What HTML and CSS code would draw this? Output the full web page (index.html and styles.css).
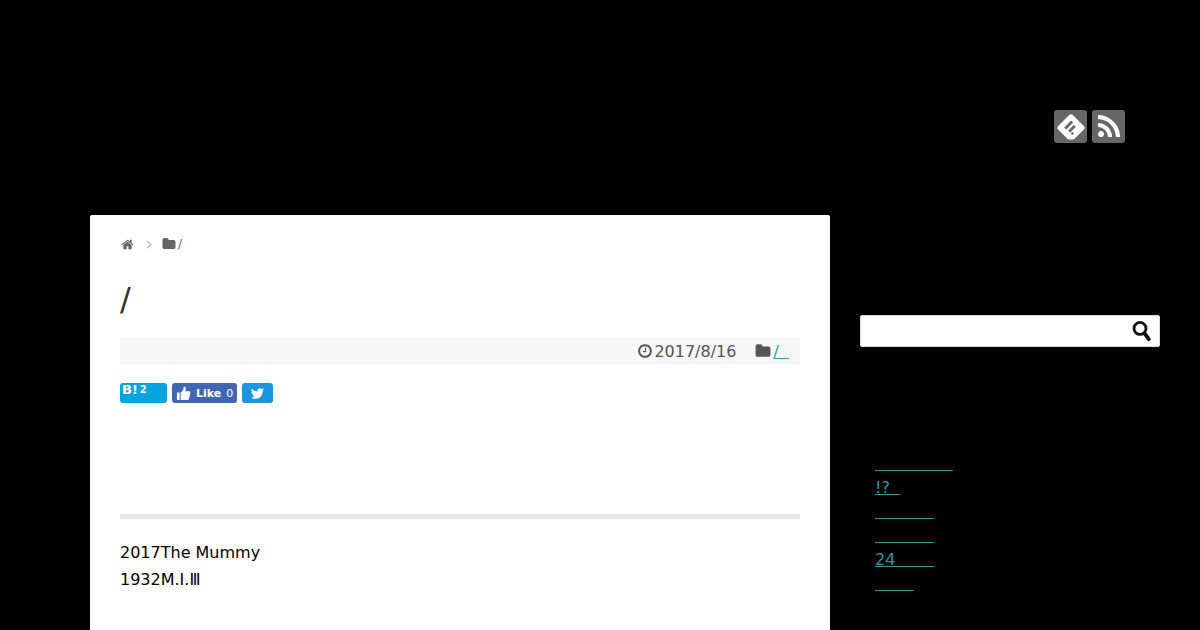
FILE: index.html
```html
<!DOCTYPE html>
<html lang="ja">
<head>
    <meta charset="UTF-8">
    <title>/</title>
    <link rel="stylesheet" href="styles.css">
</head>
<body>
    <!-- Header -->
    <header class="header">
        <a class="sns-icon" href="#">
            <svg viewBox="0 0 32 32" width="32" height="32"><path fill="#fff" fill-rule="evenodd" d="M14 4.2 a2.8 2.8 0 0 1 4 0 L28.6 14.8 a2.8 2.8 0 0 1 0 4 L19.6 27.8 a2.8 2.8 0 0 1 -2 .8 H14.4 a2.8 2.8 0 0 1 -2 -.8 L3.4 18.8 a2.8 2.8 0 0 1 0 -4 Z M16.2 9.4 L9.2 16.4 L11.2 18.4 L18.2 11.4 Z M18.8 14 L13.2 19.6 L15.2 21.6 L20.8 16 Z M17.4 20.8 L15.8 22.4 L17.4 24 L19 22.4 Z"/></svg>
        </a>
        <a class="sns-icon" href="#">
            <svg viewBox="0 0 1792 1792" width="28" height="28"><path fill="#fff" d="M576 1344q0 80-56 136t-136 56-136-56-56-136 56-136 136-56 136 56 56 136zm512 123q2 28-17 48-18 21-47 21h-135q-25 0-43-16.5t-20-41.5q-22-229-184.5-391.5t-391.5-184.5q-25-2-41.5-20t-16.5-43v-135q0-29 21-47 17-17 43-17h5q160 13 306 80.5t259 181.5q114 113 181.5 259t80.5 306zm512 2q2 27-18 47-18 20-46 20h-143q-26 0-44.5-17.5t-19.5-42.5q-12-215-101-408.5t-231.5-336-336-231.5-408.5-102q-25-1-42.5-19.5t-17.5-43.5v-143q0-28 20-46 18-18 44-18h3q262 13 501.5 120t425.5 294q187 186 294 425.5t120 501.5z"/></svg>
        </a>
    </header>

    <div class="content">
        <!-- Main article -->
        <main class="article">
            <div class="breadcrumb">
                <svg class="crumb-home" viewBox="0 0 1792 1792" width="13" height="13"><path fill="#666" d="M1472 992v480q0 26-19 45t-45 19h-384v-384h-256v384h-384q-26 0-45-19t-19-45v-480q0-1 .5-3t.5-3l575-474 575 474q1 2 1 6zm223-69l-62 74q-8 9-21 11h-3q-13 0-21-7l-692-577-692 577q-12 8-24 7-13-2-21-11l-62-74q-8-10-7-23.5t11-21.5l719-599q32-26 76-26t76 26l244 204v-195q0-14 9-23t23-9h192q14 0 23 9t9 23v408l219 182q10 8 11 21.5t-7 23.5z"/></svg>
                <svg class="crumb-sep" viewBox="0 0 8 12" width="6" height="9"><path fill="none" stroke="#777" stroke-width="1.2" d="M1.5 1 L6.5 6 L1.5 11"/></svg>
                <svg class="crumb-folder" viewBox="0 0 1792 1792" width="14" height="14"><path fill="#666" d="M1728 608v704q0 92-66 158t-158 66h-1216q-92 0-158-66t-66-158v-960q0-92 66-158t158-66h320q92 0 158 66t66 158v32h672q92 0 158 66t66 158z"/></svg>
                <span>/</span>
            </div>

            <h1 class="title">/</h1>

            <div class="meta">
                <svg viewBox="0 0 1792 1792" width="16" height="16"><path fill="#555" d="M1024 544v448q0 14-9 23t-23 9h-320q-14 0-23-9t-9-23v-64q0-14 9-23t23-9h224v-352q0-14 9-23t23-9h64q14 0 23 9t9 23zm416 352q0-148-73-273t-198-198-273-73-273 73-198 198-73 273 73 273 198 198 273 73 273-73 198-198 73-273zm224 0q0 209-103 385.5t-279.5 279.5-385.5 103-385.5-103-279.5-279.5-103-385.5 103-385.5 279.5-279.5 385.5-103 385.5 103 279.5 279.5 103 385.5z"/></svg>
                <span class="meta-date">2017/8/16</span>
                <svg class="meta-folder" viewBox="0 0 1792 1792" width="16" height="16"><path fill="#555" d="M1728 608v704q0 92-66 158t-158 66h-1216q-92 0-158-66t-66-158v-960q0-92 66-158t158-66h320q92 0 158 66t66 158v32h672q92 0 158 66t66 158z"/></svg>
                <a class="meta-link" href="#">/&nbsp;&nbsp;</a>
            </div>

            <div class="share">
                <a class="btn-hatena" href="#"><b>B!</b><span>2</span></a>
                <a class="btn-like" href="#">
                    <svg viewBox="0 0 16 16" width="15" height="15"><path fill="#fff" d="M1 7 H4 V15 H1 Z M5 7.2 L8 3.6 V1.4 C8 .9 8.4 .6 8.9 .7 C10.2 1 10.7 2.2 10.4 3.4 L10 5.6 H14 C15 5.6 15.5 6.4 15.3 7.2 L13.9 13.6 C13.7 14.4 13.1 15 12.2 15 H7 C6 15 5 14.6 5 14 Z"/></svg>
                    <b>Like</b><span>0</span>
                </a>
                <a class="btn-twitter" href="#">
                    <svg viewBox="0 0 1792 1792" width="15" height="15"><path fill="#fff" d="M1684 408q-67 98-162 167 1 14 1 42 0 130-38 259.5t-115.5 248.5-184.5 210.5-258 146-323 54.5q-271 0-496-145 35 4 78 4 225 0 401-138-105-2-188-64.5t-114-159.5q33 5 61 5 43 0 85-11-112-23-185.5-111.5t-73.5-205.5v-4q68 38 146 41-66-44-105-115t-39-154q0-88 44-163 121 149 294.5 238.5t371.5 99.5q-8-38-8-74 0-134 94.5-228.5t228.5-94.5q140 0 236 102 109-21 200-76-35 110-138 172 91-10 182-49z"/></svg>
                </a>
            </div>

            <hr class="divider">

            <p class="body-text">2017The Mummy<br>1932M.I.Ⅲ</p>
        </main>

        <!-- Sidebar -->
        <aside class="sidebar">
            <form class="search">
                <input class="search-input" type="text">
                <svg class="search-icon" viewBox="0 0 20 22" width="20" height="22"><circle cx="8" cy="8.4" r="6" fill="none" stroke="#111" stroke-width="2.8"/><path stroke="#111" stroke-width="3.8" stroke-linecap="round" d="M12.6 13.4 L16.8 19.2"/></svg>
            </form>
            <ul class="side-list">
                <li><a href="#">&nbsp;&nbsp;&nbsp;&nbsp;&nbsp;&nbsp;&nbsp;&nbsp;&nbsp;&ensp;&ensp;&ensp;&ensp;</a></li>
                <li><a href="#">!?&nbsp;&nbsp;</a></li>
                <li><a href="#">&nbsp;&nbsp;&nbsp;&nbsp;&nbsp;&nbsp;&nbsp;&nbsp;&nbsp;&nbsp;&ensp;</a></li>
                <li><a href="#">&nbsp;&nbsp;&nbsp;&nbsp;&nbsp;&nbsp;&nbsp;&nbsp;&nbsp;&nbsp;&ensp;</a></li>
                <li><a href="#">24&nbsp;&nbsp;&nbsp;&ensp;&ensp;&ensp;</a></li>
                <li><a href="#">&nbsp;&nbsp;&nbsp;&nbsp;&nbsp;&nbsp;&ensp;</a></li>
            </ul>
        </aside>
    </div>
</body>
</html>
```

FILE: styles.css
```css
html, body {
    height: 630px;
    overflow: hidden;
}

body {
    margin: 0;
    background-color: #000;
    font-family: "DejaVu Sans", sans-serif;
    font-size: 16px;
    color: #000;
}

a {
    color: #2a9fb5;
}

/* Header */
.header {
    display: flex;
    justify-content: flex-end;
    gap: 5px;
    height: 105px;
    padding: 110px 75px 0 0;
}

.sns-icon {
    display: flex;
    justify-content: center;
    align-items: center;
    width: 33px;
    height: 33px;
    background-color: #666;
    border-radius: 3px;
}

/* Layout */
.content {
    display: flex;
    align-items: flex-start;
    gap: 30px;
    padding-left: 90px;
}

.article {
    width: 680px;
    height: 415px;
    padding: 0 30px;
    background-color: #fff;
    border-radius: 2px 2px 0 0;
}

/* Breadcrumb */
.breadcrumb {
    display: flex;
    align-items: center;
    height: 14px;
    padding-top: 22px;
    font-size: 12px;
    color: #666;
}

.crumb-home {
    margin: 0 1px 0 1px;
}

.crumb-sep {
    margin: 0 10px 0 11px;
}

.crumb-folder {
    margin-right: 2px;
}

/* Title */
.title {
    height: 38px;
    margin: 29px 0 0;
    font-size: 32px;
    font-weight: 400;
    line-height: 38px;
    color: #333;
}

/* Post meta */
.meta {
    display: flex;
    justify-content: flex-end;
    align-items: center;
    height: 28px;
    margin-top: 19px;
    padding-right: 11px;
    background-color: #f7f7f7;
    color: #555;
}

.meta-date {
    margin-left: 1px;
}

.meta-folder {
    margin: 0 2px 0 19px;
}

/* Share buttons */
.share {
    display: flex;
    gap: 5px;
    margin-top: 18px;
}

.share a {
    display: flex;
    align-items: center;
    height: 20px;
    border-radius: 3px;
    color: #fff;
    text-decoration: none;
}

.btn-hatena {
    width: 47px;
    padding-left: 2px;
    box-sizing: border-box;
    background-color: #00a4de;
    align-items: flex-start !important;
    font-size: 13px;
    line-height: 14px;
}

.btn-hatena span {
    margin-left: 2px;
    font-size: 10px;
    font-weight: 700;
}

.btn-like {
    gap: 5px;
    padding: 0 4px;
    background-color: #4267b2;
    font-size: 11px;
}

.btn-like span {
    font-weight: 400;
}

.btn-twitter {
    justify-content: center;
    width: 31px;
    background-color: #1b95e0;
}

/* Article body */
.divider {
    height: 5px;
    margin: 111px 0 0;
    background-color: #e8e8e8;
    border: none;
}

.body-text {
    margin: 20px 0 0;
    line-height: 27px;
}

/* Sidebar */
.sidebar {
    width: 300px;
    padding-top: 100px;
}

.search {
    position: relative;
    height: 32px;
}

.search-input {
    display: block;
    width: 100%;
    height: 32px;
    box-sizing: border-box;
    background-color: #fff;
    border: 1px solid #ddd;
    border-radius: 2px;
}

.search-icon {
    position: absolute;
    top: 5px;
    right: 8px;
}

.side-list {
    margin: 105px 0 0;
    padding: 0 0 0 15px;
    list-style: none;
    line-height: 24px;
}

.side-list a {
    color: #2f9aa5;
}
```
